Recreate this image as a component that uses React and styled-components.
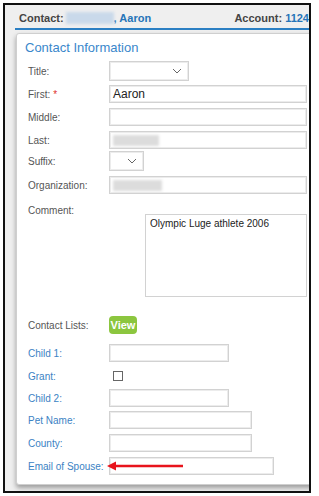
import styled, { createGlobalStyle } from "styled-components";

const GlobalStyle = createGlobalStyle`
  html, body {
    margin: 0;
    padding: 0;
    background: #fff;
  }
  body {
    font-family: "Liberation Sans", Arial, sans-serif;
  }
`;

const Page = styled.div`
  padding: 3px 0 0 3px;
  width: 319px;
  height: 496px;
  box-sizing: border-box;
`;

const Frame = styled.div`
  width: 308px;
  height: 490px;
  box-sizing: border-box;
  border: 2px solid #111;
  background: #efefef;
  overflow: hidden;
`;

const Inner = styled.div`
  width: 330px;
`;

const Header = styled.div`
  display: flex;
  align-items: center;
  width: 290px;
  margin-left: 10px;
  padding: 5px 0 2px 4px;
  height: 16px;
  border-bottom: 2px solid #2b7fc3;
  font-size: 11px;
  font-weight: bold;
  color: #444;
  white-space: nowrap;
`;

const Blue = styled.span`
  color: #2574b8;
`;

const Blur = styled.span`
  display: inline-block;
  width: ${(p) => p.$w}px;
  height: ${(p) => p.$h}px;
  margin-left: ${(p) => p.$ml || 0}px;
  background: ${(p) => p.$c};
  filter: blur(1.5px);
  vertical-align: middle;
`;

const Account = styled.span`
  margin-left: auto;
`;

const Panel = styled.div`
  margin: 3px 0 0 11px;
  width: 310px;
  background: #fff;
  border: 1px solid #cfcfcf;
  border-radius: 3px;
  box-shadow: 0 3px 5px rgba(0, 0, 0, 0.35);
  padding: 6px 0 9px 0;
`;

const Title = styled.div`
  font-size: 13px;
  color: #3a87cb;
  padding-left: 8px;
  height: 16px;
  line-height: 16px;
`;

const Form = styled.div`
  display: flex;
  flex-direction: column;
  gap: 5px;
  margin-top: 5px;
  padding-left: 11px;
`;

const Row = styled.div`
  position: relative;
  display: flex;
  align-items: ${(p) => (p.$top ? "flex-start" : "center")};
  min-height: 18px;
  margin-top: ${(p) => p.$mt || 0}px;
`;

const Label = styled.div`
  width: 81px;
  flex: none;
  font-size: 10px;
  white-space: nowrap;
  color: ${(p) => (p.$blue ? "#3b82c4" : "#555")};
  padding-top: ${(p) => (p.$top ? 1 : 0)}px;
`;

const Req = styled.span`
  color: #e0312b;
  margin-left: 3px;
`;

const Input = styled.div`
  box-sizing: border-box;
  width: ${(p) => p.$w}px;
  height: ${(p) => p.$h || 18}px;
  border: 1px solid #d2d2d2;
  box-shadow: inset 0 0 0 1px #ececec;
  background: #fff;
  display: flex;
  align-items: center;
  padding-left: 3px;
  font-size: 12px;
  color: #222;
`;

const Select = styled(Input)`
  height: 20px;
  justify-content: flex-end;
  padding-right: 6px;
`;

const TextArea = styled.div`
  box-sizing: border-box;
  width: 162px;
  height: 83px;
  margin: 10px 0 0 36px;
  border: 1px solid #d2d2d2;
  padding: 3px 4px;
  font-size: 10px;
  color: #222;
`;

const ViewButton = styled.div`
  width: 28px;
  height: 18px;
  border-radius: 4px;
  background: #8cc63f;
  color: #fff;
  font-size: 11px;
  font-weight: bold;
  display: flex;
  align-items: center;
  justify-content: center;
`;

const Check = styled.span`
  box-sizing: border-box;
  width: 10px;
  height: 10px;
  margin-left: 4px;
  border: 1px solid #666;
  background: #fff;
`;

const Arrow = styled.svg`
  position: absolute;
  left: 79px;
  top: 3px;
`;

const Chevron = () => (
  <svg width="10" height="6" viewBox="0 0 10 6">
    <polyline points="1,1 5,5 9,1" fill="none" stroke="#666" strokeWidth="1" />
  </svg>
);

export default function App() {
  return (
    <>
      <GlobalStyle />
      <Page>
        <Frame>
          <Inner>
            <Header>
              <span>Contact:</span>
              <Blur $w={48} $h={12} $ml={2} $c="#c9d9ea" />
              <Blue>, Aaron</Blue>
              <Account>
                Account: <Blue>1124</Blue>
              </Account>
            </Header>
            <Panel>
              <Title>Contact Information</Title>
              <Form>
                <Row>
                  <Label>Title:</Label>
                  <Select $w={80}>
                    <Chevron />
                  </Select>
                </Row>
                <Row $mt={-1}>
                  <Label>
                    First:<Req>*</Req>
                  </Label>
                  <Input $w={198}>Aaron</Input>
                </Row>
                <Row>
                  <Label>Middle:</Label>
                  <Input $w={198} />
                </Row>
                <Row>
                  <Label>Last:</Label>
                  <Input $w={198}>
                    <Blur $w={46} $h={11} $c="#dcdcdc" />
                  </Input>
                </Row>
                <Row $mt={-3}>
                  <Label>Suffix:</Label>
                  <Select $w={35}>
                    <Chevron />
                  </Select>
                </Row>
                <Row>
                  <Label>Organization:</Label>
                  <Input $w={198}>
                    <Blur $w={49} $h={11} $c="#dcdcdc" />
                  </Input>
                </Row>
                <Row $top $mt={5}>
                  <Label $top>Comment:</Label>
                  <TextArea>Olympic Luge athlete 2006</TextArea>
                </Row>
                <Row $mt={14}>
                  <Label>Contact Lists:</Label>
                  <ViewButton>View</ViewButton>
                </Row>
                <Row $mt={5}>
                  <Label $blue>Child 1:</Label>
                  <Input $w={120} />
                </Row>
                <Row>
                  <Label $blue>Grant:</Label>
                  <Check />
                </Row>
                <Row $mt={-1}>
                  <Label $blue>Child 2:</Label>
                  <Input $w={120} />
                </Row>
                <Row $mt={-1}>
                  <Label $blue>Pet Name:</Label>
                  <Input $w={143} />
                </Row>
                <Row>
                  <Label $blue>County:</Label>
                  <Input $w={143} />
                </Row>
                <Row>
                  <Label $blue>Email of Spouse:</Label>
                  <Input $w={165} />
                  <Arrow width="80" height="12" viewBox="0 0 80 12">
                    <line x1="6" y1="6" x2="76" y2="6" stroke="#e8141c" strokeWidth="2.5" />
                    <polygon points="0,6 9,1.5 9,10.5" fill="#e8141c" />
                  </Arrow>
                </Row>
              </Form>
            </Panel>
          </Inner>
        </Frame>
      </Page>
    </>
  );
}
